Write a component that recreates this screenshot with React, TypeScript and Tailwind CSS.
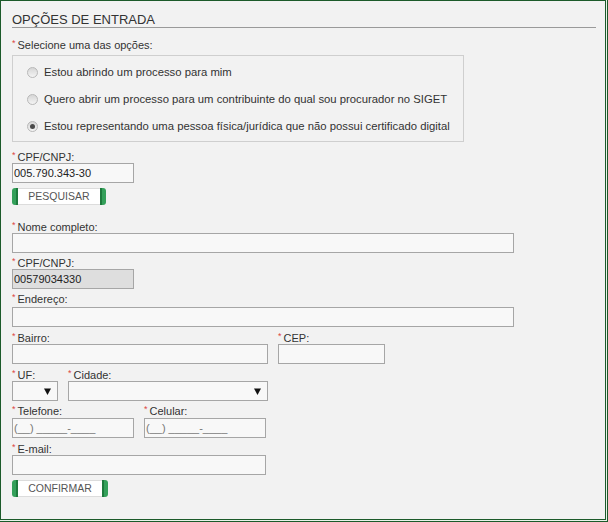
const OPCOES = [
  { label: 'Estou abrindo um processo para mim', checked: false },
  { label: 'Quero abrir um processo para um contribuinte do qual sou procurador no SIGET', checked: false },
  { label: 'Estou representando uma pessoa física/jurídica que não possui certificado digital', checked: true },
]

function Label({ text, className = '' }: { text: string; className?: string }) {
  return (
    <div className={`flex items-start h-[12px] text-[11px] leading-[12px] text-[#333] whitespace-nowrap ${className}`}>
      <span className="mr-[2px] text-[9px] leading-[9px] text-[#d44]">*</span>
      {text}
    </div>
  )
}

function Input({ w, value = '', disabled = false, muted = false }: { w: string; value?: string; disabled?: boolean; muted?: boolean }) {
  return (
    <div
      className={`${w} h-[20px] border border-[#a6a6a6] px-[1px] text-[11px] leading-[18px] whitespace-nowrap ${
        disabled ? 'bg-[#dedede]' : 'bg-[#f8f8f8]'
      } ${muted ? 'text-[#777]' : 'text-[#222]'}`}
    >
      {value}
    </div>
  )
}

function Select({ w }: { w: string }) {
  return (
    <div className={`${w} h-[20px] border border-[#a6a6a6] bg-[#f8f8f8] flex items-center justify-end pr-[6px]`}>
      <svg width="7" height="7" viewBox="0 0 7 7">
        <path d="M0 0.5 L7 0.5 L3.5 7 Z" fill="#111" />
      </svg>
    </div>
  )
}

function Botao({ text, w }: { text: string; w: string }) {
  return (
    <div className={`${w} h-[17px] flex items-stretch`}>
      <span className="w-[6px] rounded-l-[3px] bg-[#34a05a] border-r-2 border-[#1d7a3d]" />
      <span className="flex-1 bg-white border-y border-[#dcdcdc] flex items-center justify-center text-[10.5px] text-[#555]">
        {text}
      </span>
      <span className="w-[6px] rounded-r-[3px] bg-[#34a05a] border-l-2 border-[#1d7a3d]" />
    </div>
  )
}

function Radio({ checked }: { checked: boolean }) {
  return (
    <span className="w-[11px] h-[11px] rounded-full border border-[#b8b8b8] bg-gradient-to-b from-[#d6d6d6] to-[#f4f4f4] flex items-center justify-center shrink-0">
      {checked && <span className="w-[5px] h-[5px] rounded-full bg-[#4a4a4a]" />}
    </span>
  )
}

export default function App() {
  return (
    <div className="w-[608px] h-[522px] pr-[1px] pb-[1px] border-r border-b border-[#1c5a2a] bg-[#e9f3ea]">
      <div
        className="w-full h-full border border-[#1c5a2a] bg-[#f2f2f2] pl-[11px] pt-[11px] text-[#333]"
        style={{ fontFamily: 'Tahoma, "Liberation Sans", Arial, sans-serif' }}
      >
        <div className="mr-[9px] border-b border-[#9a9a9a] text-[13px] leading-[15px] text-[#333]">
          OPÇÕES DE ENTRADA
        </div>

        <Label text="Selecione uma das opções:" className="mt-[11px]" />
        <div className="mt-[4px] w-[452px] h-[87px] border border-[#cfcfcf] flex flex-col pt-[9px] gap-[13px] pl-[14px]">
          {OPCOES.map((o) => (
            <div key={o.label} className="flex items-center h-[14px] gap-[6px] text-[11.3px] leading-[14px] text-[#333] whitespace-nowrap">
              <Radio checked={o.checked} />
              {o.label}
            </div>
          ))}
        </div>

        <Label text="CPF/CNPJ:" className="mt-[9px]" />
        <Input w="w-[122px]" value="005.790.343-30" />
        <div className="mt-[5px]">
          <Botao text="PESQUISAR" w="w-[94px]" />
        </div>

        <Label text="Nome completo:" className="mt-[16px]" />
        <Input w="w-[502px]" />

        <Label text="CPF/CNPJ:" className="mt-[4px]" />
        <Input w="w-[122px]" value="00579034330" disabled />

        <Label text="Endereço:" className="mt-[4px]" />
        <div className="mt-[2px]">
          <Input w="w-[502px]" />
        </div>

        <div className="mt-[5px] flex gap-[10px]">
          <div>
            <Label text="Bairro:" />
            <Input w="w-[256px]" />
          </div>
          <div>
            <Label text="CEP:" />
            <Input w="w-[107px]" />
          </div>
        </div>

        <div className="mt-[5px] flex gap-[10px]">
          <div>
            <Label text="UF:" />
            <Select w="w-[46px]" />
          </div>
          <div>
            <Label text="Cidade:" />
            <Select w="w-[200px]" />
          </div>
        </div>

        <div className="mt-[4px] flex gap-[10px]">
          <div>
            <Label text="Telefone:" />
            <div className="mt-[1px]">
              <Input w="w-[122px]" value="(__) _____-____" muted />
            </div>
          </div>
          <div>
            <Label text="Celular:" />
            <div className="mt-[1px]">
              <Input w="w-[122px]" value="(__) _____-____" muted />
            </div>
          </div>
        </div>

        <Label text="E-mail:" className="mt-[5px]" />
        <Input w="w-[254px]" />
        <div className="mt-[5px]">
          <Botao text="CONFIRMAR" w="w-[96px]" />
        </div>
      </div>
    </div>
  )
}
